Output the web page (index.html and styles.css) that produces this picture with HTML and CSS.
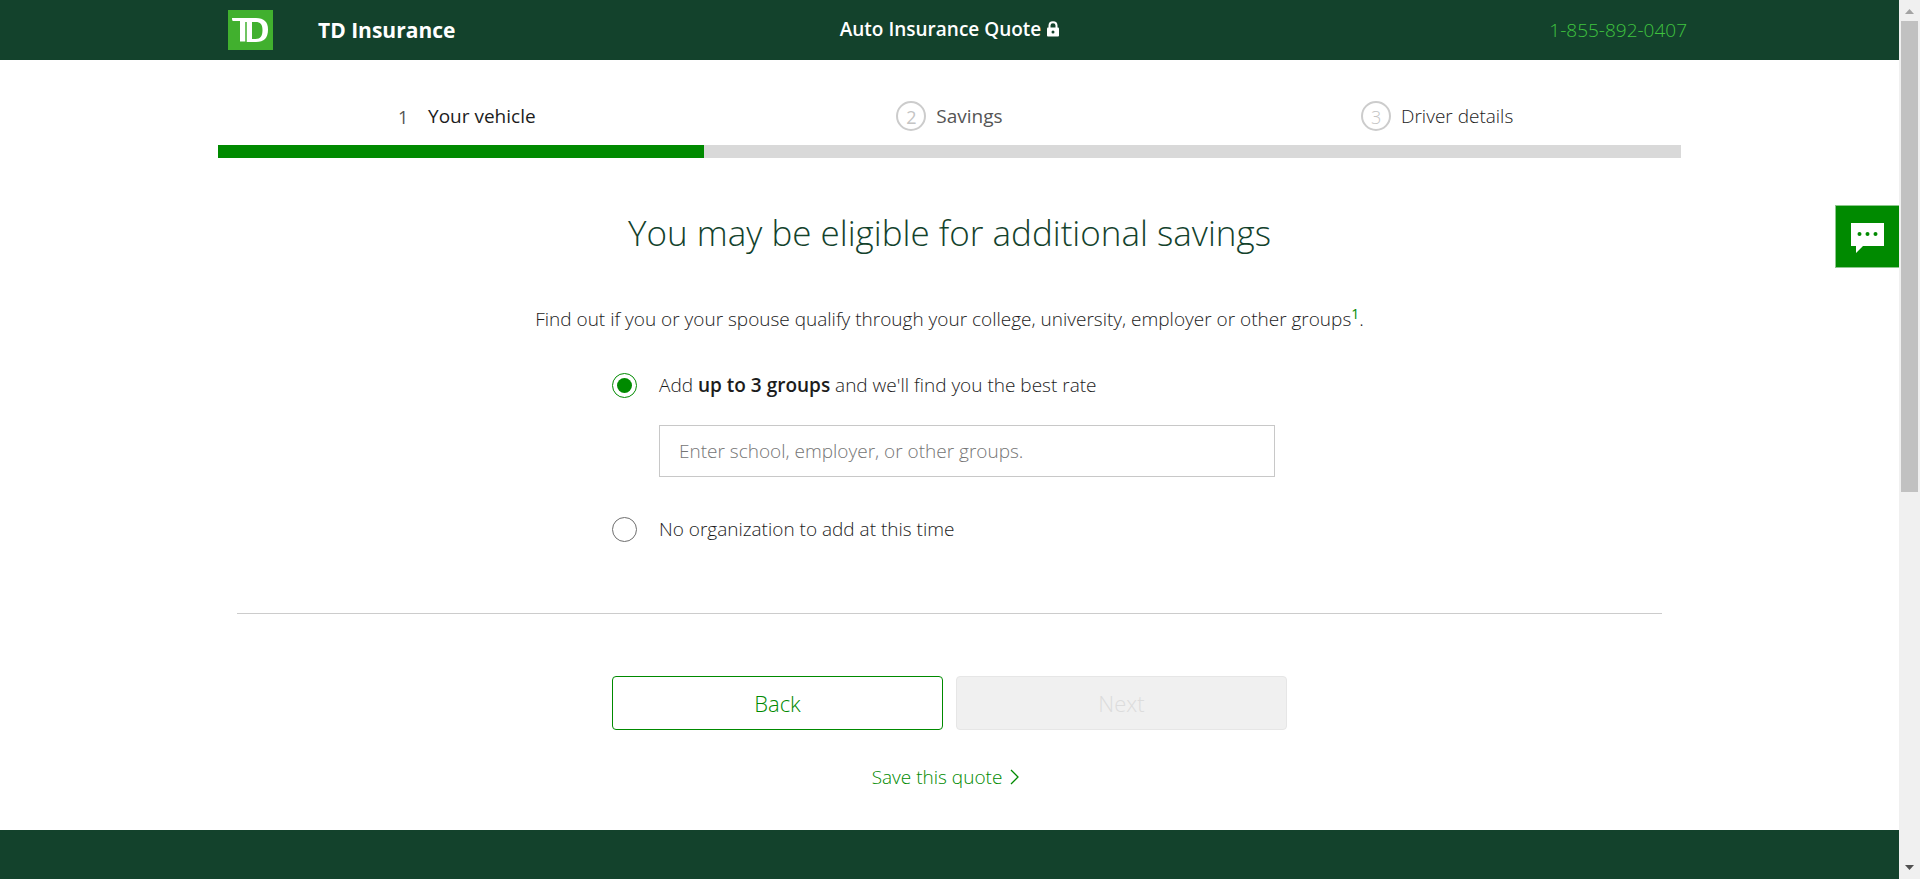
FILE: index.html
```html
<!DOCTYPE html>
<html lang="en">
<head>
<meta charset="utf-8">
<title>Auto Insurance Quote</title>
<link rel="stylesheet" href="styles.css">
</head>
<body>
<div class="page">
  <header class="header">
    <div class="header-inner">
      <div class="brand">
        <svg class="logo" viewBox="0 0 45 40" aria-label="TD" role="img">
          <rect width="45" height="40" fill="#41b02e"/>
          <path fill="#fff" fill-rule="evenodd" d="M4 8H28C36 8 40 12 40 19.500C40 28 36 32 28 32H18.500V12H17.500V31.500H12V11H5.500C4.500 11 4 10.500 4 8ZM24 12V29H27.500C32.500 29 34.500 26 34.500 20C34.500 14.500 32.500 12 27.500 12Z"/>
          <path fill="none" stroke="#41b02e" stroke-width="1" d="M18 12V33"/>
        </svg>
        <span class="brand-name">TD Insurance</span>
      </div>
      <div class="header-title">
        <span>Auto Insurance Quote</span>
        <svg class="lock" viewBox="0 0 12 16" aria-hidden="true">
          <path fill="none" stroke="#fff" stroke-width="2" d="M2.500 7.500V4.500C2.500 0 9.500 0 9.500 4.500V7.500"/>
          <rect y="6.500" width="12" height="9" rx="1" fill="#fff"/>
          <circle cx="6" cy="11" r="1.500" fill="#13422c"/>
        </svg>
      </div>
      <a class="phone" href="tel:18558920407">1-855-892-0407</a>
    </div>
  </header>

  <nav class="progress" aria-label="Progress">
    <ol class="steps">
      <li class="step step-current"><span class="step-number">1</span><span>Your vehicle</span></li>
      <li class="step step-next"><span class="step-number">2</span><span>Savings</span></li>
      <li class="step"><span class="step-number">3</span><span>Driver details</span></li>
    </ol>
    <div class="track"><div class="track-fill"></div></div>
  </nav>

  <main class="content">
    <h1 class="title">You may be eligible for additional savings</h1>
    <p class="lead">Find out if you or your spouse qualify through your college, university, employer or other groups<sup><a href="#note">1</a></sup>.</p>
    <form class="form">
      <div class="choice">
        <input class="radio" type="radio" name="group" id="add" checked>
        <label for="add">Add <b>up to 3 groups</b> and we'll find you the best rate</label>
      </div>
      <input class="field" type="text" aria-label="Groups" placeholder="Enter school, employer, or other groups.">
      <div class="choice">
        <input class="radio" type="radio" name="group" id="none">
        <label for="none">No organization to add at this time</label>
      </div>
    </form>
    <hr class="rule">
    <div class="actions">
      <button class="button button-back" type="button">Back</button>
      <button class="button button-next" type="button" disabled>Next</button>
    </div>
    <a class="save" href="#save">Save this quote
      <svg class="chevron" viewBox="0 0 9 16" aria-hidden="true"><path d="M1 1L8 8L1 15" fill="none" stroke="currentColor" stroke-width="1.300"/></svg>
    </a>
  </main>
  <footer class="footer"></footer>

  <button class="chat" type="button" aria-label="Chat">
    <svg class="chat-icon" viewBox="0 0 33 31" aria-hidden="true">
      <path fill="#fff" d="M0 0H33V23H12L5 30V23H0Z"/>
      <g fill="#008a00"><circle cx="8.500" cy="11" r="2"/><circle cx="16.500" cy="11" r="2"/><circle cx="24.500" cy="11" r="2"/></g>
    </svg>
  </button>
</div>
<div class="scrollbar" aria-hidden="true">
  <svg class="arrow" viewBox="0 0 9 5"><path fill="#a3a3a3" d="M0 5L4.500 0L9 5Z"/></svg>
  <div class="thumb"></div>
  <svg class="arrow arrow-down" viewBox="0 0 9 5"><path fill="#505050" d="M0 0L4.500 5L9 0Z"/></svg>
</div>
</body>
</html>
```
FILE: styles.css
```css
* { box-sizing: border-box; }

body {
  margin: 0;
  height: 100vh;
  display: flex;
  overflow: hidden;
  background: #fff;
  color: #1c1c1c;
  font-family: "Open Sans", "Noto Sans", sans-serif;
  font-size: 19px;
  font-weight: 350;
  line-height: 28px;
}

a { text-decoration: none; }

.page {
  position: relative;
  flex: 1;
  min-width: 0;
  display: flex;
  flex-direction: column;
}

.header {
  flex: none;
  height: 60px;
  padding: 0 212px;
  background: #13422c;
  color: #fff;
}

.header-inner {
  height: 100%;
  display: grid;
  grid-template-columns: 1fr auto 1fr;
  align-items: center;
}

.brand {
  display: flex;
  align-items: center;
  gap: 45px;
  padding-left: 16px;
}

.logo { width: 45px; height: 40px; }

.brand-name { font-size: 21px; font-weight: 700; }

.header-title {
  display: flex;
  align-items: center;
  gap: 6px;
  padding-bottom: 2px;
  font-weight: 600;
}

.lock { width: 12px; height: 16px; }

.phone {
  justify-self: end;
  color: #3fc33f;
}

.progress { padding: 41px 218px 0; }

.steps {
  display: grid;
  grid-template-columns: repeat(3, 1fr);
  margin: 0 0 14px;
  padding: 0;
  list-style: none;
}

.step {
  display: flex;
  align-items: center;
  justify-content: center;
  gap: 10px;
}

.step-number {
  display: grid;
  place-items: center;
  width: 30px;
  height: 30px;
  border: 2px solid #ccc;
  border-radius: 50%;
  color: #c4c4c4;
  font-size: 18px;
}

.step-current { font-weight: 500; }

.step-current .step-number {
  border-color: transparent;
  color: #555;
}

.step-next { color: #555; font-weight: 500; }

.track { height: 13px; background: #d9d9d9; }

.track-fill {
  width: 33.22%;
  height: 100%;
  background: #008a00;
}

.content {
  display: flex;
  flex-direction: column;
  align-items: center;
  padding: 50px 237px 39px;
}

.title {
  margin: 0;
  color: #13422c;
  font-size: 35px;
  font-weight: 300;
  line-height: 50px;
}

.lead { margin: 47px 0 38px; }

.lead sup { font-size: 14px; font-weight: 500; line-height: 0; }

.lead a, .save { color: #008a00; }

.form { width: 675px; }

.choice {
  display: flex;
  align-items: center;
  gap: 22px;
}

.choice b { font-weight: 600; }

.radio {
  appearance: none;
  display: grid;
  place-items: center;
  width: 25px;
  height: 25px;
  margin: 0;
  border: 1px solid #6e6e6e;
  border-radius: 50%;
}

.radio:checked { border-color: #008a00; }

.radio:checked::before {
  content: "";
  width: 15px;
  height: 15px;
  border-radius: 50%;
  background: #008a00;
}

.field {
  display: block;
  width: 616px;
  height: 52px;
  margin: 26px 0 38px 47px;
  padding: 0 19px;
  border: 1px solid #c8c8c8;
  background: #fff;
  color: inherit;
  font: inherit;
}

.field::placeholder { color: #757575; opacity: 1; font-weight: 300; }

.rule {
  width: 100%;
  margin: 70px 0 62px;
  border: 0;
  border-top: 1px solid #ccc;
}

.actions {
  display: flex;
  gap: 13px;
  width: 675px;
}

.button {
  flex: 1;
  height: 54px;
  border: 1px solid #008a00;
  border-radius: 4px;
  background: #fff;
  color: #008a00;
  font: inherit;
  font-size: 22px;
}

.button-next {
  border-color: #e6e6e6;
  background: #f0f0f0;
  color: #dcdcdc;
}

.save {
  display: flex;
  align-items: center;
  gap: 8px;
  margin: 33px 8px 0 0;
}

.chevron { width: 9px; height: 16px; }

.footer { flex: 1; background: #13422c; }

.chat {
  position: absolute;
  top: 205px;
  right: 0;
  display: grid;
  place-items: center;
  width: 64px;
  height: 63px;
  padding: 4px 0 0;
  border: 1px solid #8cc88c;
  border-right: 0;
  background: #008a00;
}

.chat-icon { width: 33px; height: 31px; }

.scrollbar {
  flex: none;
  display: flex;
  flex-direction: column;
  align-items: center;
  width: 21px;
  padding: 9px 0;
  background: #f0f0f0;
}

.arrow { width: 9px; height: 5px; }

.thumb {
  width: 17px;
  height: 471px;
  margin: 7px 0 auto;
  background: #c1c1c1;
}
```
